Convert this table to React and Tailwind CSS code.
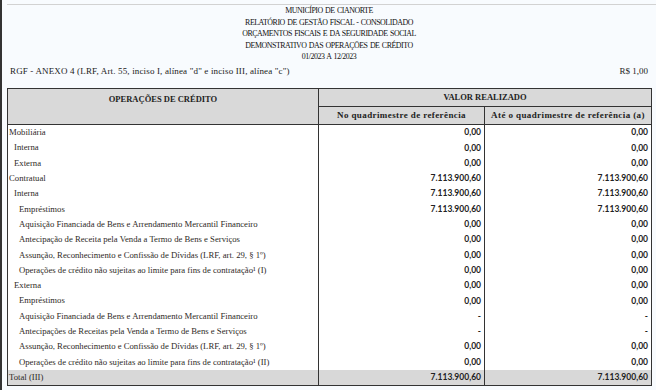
import React from "react";

const titleLines = [
  "MUNICÍPIO DE CIANORTE",
  "RELATÓRIO DE GESTÃO FISCAL - CONSOLIDADO",
  "ORÇAMENTOS FISCAIS E DA SEGURIDADE SOCIAL",
  "DEMONSTRATIVO DAS OPERAÇÕES DE CRÉDITO",
  "01/2023 A 12/2023",
];

const total = "7.113.900,60";

const rows = [
  { label: "Mobiliária", level: 0, a: "0,00", b: "0,00" },
  { label: "Interna", level: 1, a: "0,00", b: "0,00" },
  { label: "Externa", level: 1, a: "0,00", b: "0,00" },
  { label: "Contratual", level: 0, a: total, b: total },
  { label: "Interna", level: 1, a: total, b: total },
  { label: "Empréstimos", level: 2, a: total, b: total },
  {
    label: "Aquisição Financiada de Bens e Arrendamento Mercantil Financeiro",
    level: 2,
    a: "0,00",
    b: "0,00",
  },
  {
    label: "Antecipação de Receita pela Venda a Termo de Bens e Serviços",
    level: 2,
    a: "0,00",
    b: "0,00",
  },
  {
    label: "Assunção, Reconhecimento e Confissão de Dívidas (LRF, art. 29, § 1º)",
    level: 2,
    a: "0,00",
    b: "0,00",
  },
  {
    label: "Operações de crédito não sujeitas ao limite para fins de contratação¹ (I)",
    level: 2,
    a: "0,00",
    b: "0,00",
  },
  { label: "Externa", level: 1, a: "0,00", b: "0,00" },
  { label: "Empréstimos", level: 2, a: "0,00", b: "0,00" },
  {
    label: "Aquisição Financiada de Bens e Arrendamento Mercantil Financeiro",
    level: 2,
    a: "-",
    b: "-",
  },
  {
    label: "Antecipações de Receitas pela Venda a Termo de Bens e Serviços",
    level: 2,
    a: "-",
    b: "-",
  },
  {
    label: "Assunção, Reconhecimento e Confissão de Dívidas (LRF, art. 29, § 1º)",
    level: 2,
    a: "0,00",
    b: "0,00",
  },
  {
    label: "Operações de crédito não sujeitas ao limite para fins de contratação¹ (II)",
    level: 2,
    a: "0,00",
    b: "0,00",
  },
  { label: "Total (III)", level: 0, a: total, b: total, isTotal: true },
];

const indent = ["pl-[1px]", "pl-[6px]", "pl-[11px]"];

export default function App() {
  return (
    <div className="min-h-screen border-l-2 border-[#333] bg-[#f8fbfe] pt-[4px] font-['Liberation_Serif',serif] text-[#222]">
      <div className="ml-[5px] h-px bg-[#d2d2d2]" />

      <div className="flex flex-col items-center text-[7.9px] leading-[11.5px] tracking-[-0.45px] text-[#111] [word-spacing:0.8px]">
        {titleLines.map((line) => (
          <span key={line}>{line}</span>
        ))}
      </div>

      <div className="mt-[3px] flex justify-between pl-[8px] pr-[8px] text-[9px] leading-[11.5px] tracking-[0.15px]">
        <span>RGF - ANEXO 4 (LRF, Art. 55, inciso I, alínea "d" e inciso III, alínea "c")</span>
        <span className="tracking-normal">R$ 1,00</span>
      </div>

      <div className="ml-[5px] mr-[4px] mt-[11px] border border-[#333] bg-white">
        <div className="grid grid-cols-[311px_166px_1fr] border-b border-[#333] bg-[#d9d9d9] font-bold leading-[11px]">
          <div className="row-span-2 flex justify-center border-r border-[#333] pt-[5px] text-[8.5px]">
            OPERAÇÕES DE CRÉDITO
          </div>
          <div className="col-span-2 flex h-[18px] items-center justify-center border-b border-[#333] text-[8.5px]">
            VALOR REALIZADO
          </div>
          <div className="flex h-[17px] items-center justify-center border-r border-[#333] text-[9px] tracking-[0.4px]">
            No quadrimestre de referência
          </div>
          <div className="flex h-[17px] items-center justify-center text-[9px] tracking-[0.4px]">
            Até o quadrimestre de referência (a)
          </div>
        </div>

        {rows.map((row, i) => (
          <div
            key={i}
            className={`grid h-[15.3px] grid-cols-[311px_166px_1fr] items-stretch ${
              row.isTotal ? "bg-[#d8d8d8]" : ""
            }`}
          >
            <div
              className={`flex items-center whitespace-nowrap border-r border-[#333] text-[8.7px] text-[#2e2a26] ${indent[row.level]}`}
            >
              {row.label}
            </div>
            <div className="flex items-center justify-end border-r border-[#333] pr-[3px] font-['Lato',sans-serif] text-[8.5px] font-bold">
              {row.a}
            </div>
            <div className="flex items-center justify-end pr-[3px] font-['Lato',sans-serif] text-[8.5px] font-bold">
              {row.b}
            </div>
          </div>
        ))}
      </div>
    </div>
  );
}
